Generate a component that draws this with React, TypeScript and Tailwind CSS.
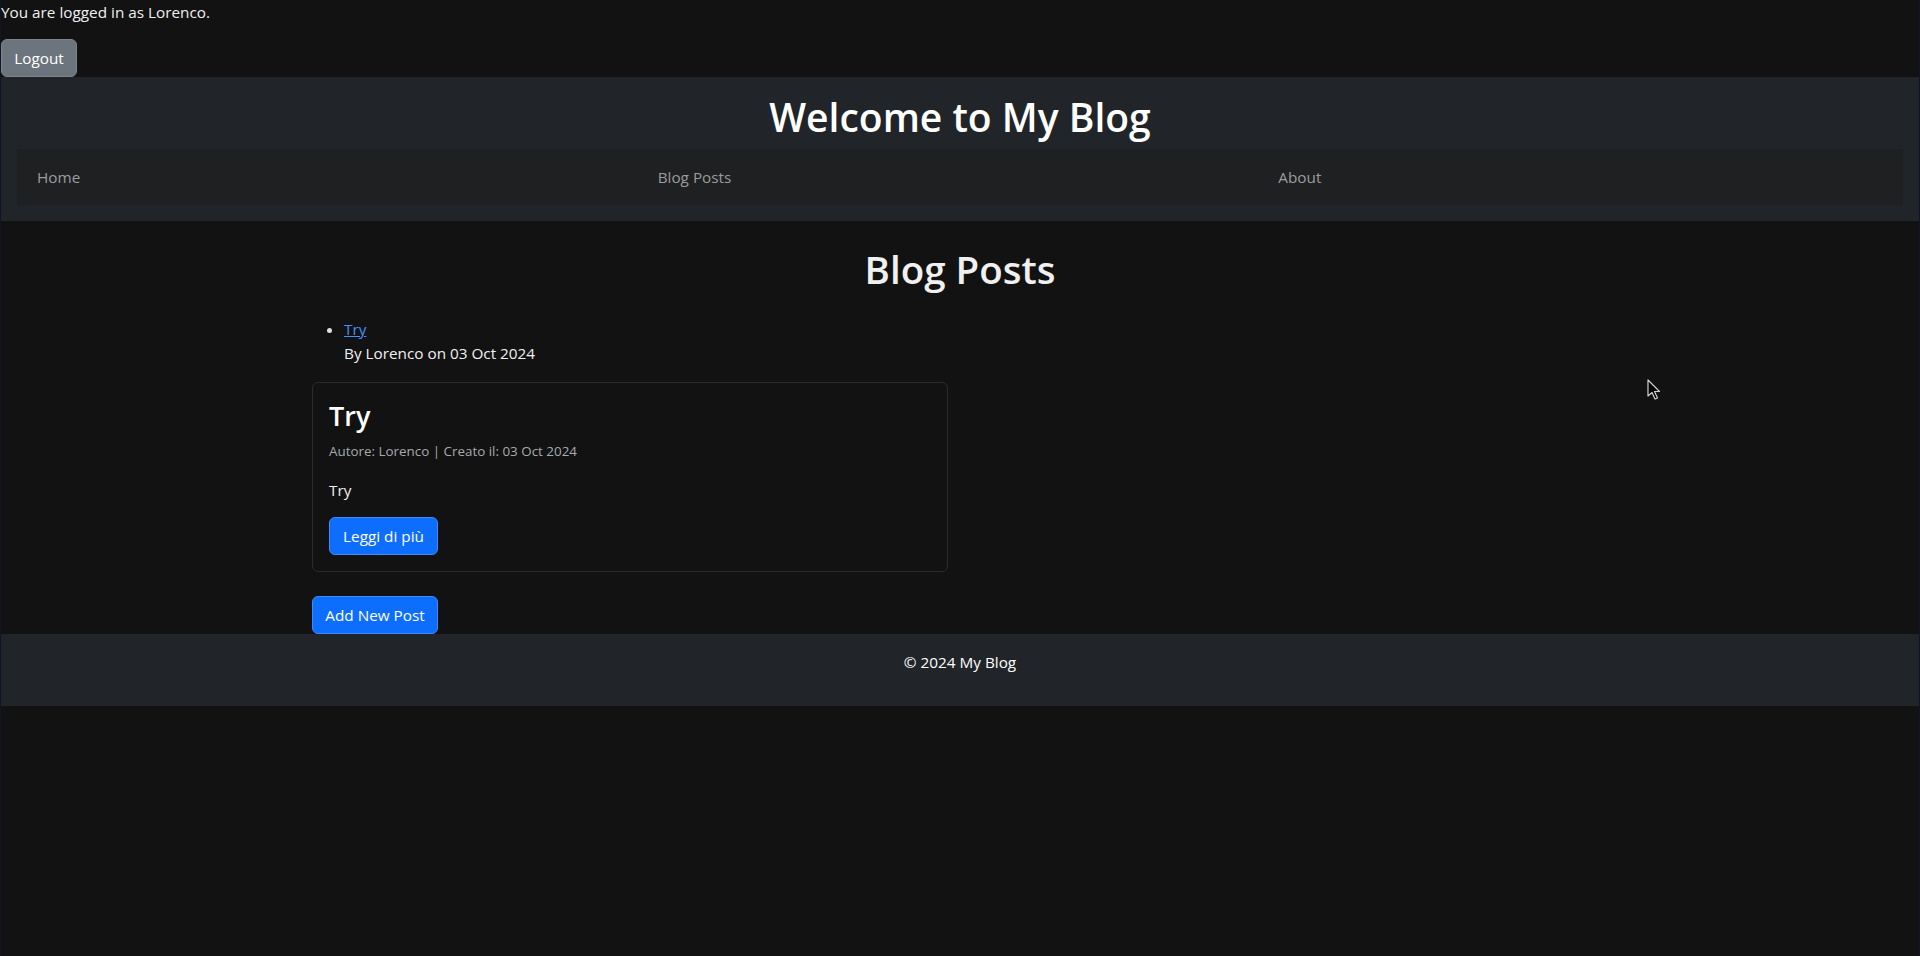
import React from "react";

export default function App() {
  return (
    <div className="relative min-h-[956px] bg-[#121212] text-white border-x border-[#0f1426] font-['Open_Sans',_'Noto_Sans',_sans-serif]">
      <p className="text-[15.3px] leading-[24px] mb-[15px] text-[#f0f0f0]">You are logged in as Lorenco.</p>
      <button className="h-[38px] w-[76px] rounded-[6px] bg-[#6c757d] border border-[#7d858c] text-[15.3px] leading-[24px] text-white">
        Logout
      </button>

      <header className="bg-[#212529] p-4">
        <h1 className="text-[39px] leading-[48px] font-semibold text-center mb-2">Welcome to My Blog</h1>
        <nav className="bg-[#1f2022] h-[56px] py-2 px-3">
          <ul className="grid grid-cols-3 h-full">
            <li className="flex items-center">
              <a className="px-2 text-[15.3px] leading-[24px] text-[#9b9c9d]">Home</a>
            </li>
            <li className="flex items-center">
              <a className="px-2 text-[15.3px] leading-[24px] text-[#9b9c9d]">Blog Posts</a>
            </li>
            <li className="flex items-center">
              <a className="px-2 text-[15.3px] leading-[24px] text-[#9b9c9d]">About</a>
            </li>
          </ul>
        </nav>
      </header>

      <main className="w-[1320px] mx-auto px-3 pt-6">
        <h1 className="text-[38.5px] leading-[48px] font-semibold text-center text-[#f0f0f0]">Blog Posts</h1>
        <ul className="list-disc pl-8 mt-[24px] mb-[17px] text-[15.3px] leading-[24px] marker:text-[#e0e0e0]">
          <li>
            <a className="text-[#4a8ff7] underline">Try</a>
            <br />
            <span className="text-[#f0f0f0]">By Lorenco on 03 Oct 2024</span>
          </li>
        </ul>
        <div className="w-[636px] border border-[#2a2b2c] rounded-[6px] p-4">
          <h3 className="text-[27px] leading-[34px] font-semibold mb-2">Try</h3>
          <p className="text-[13.4px] leading-[21px] text-[#a7aaad] mb-[16px]">
            Autore: Lorenco | Creato il: 03 Oct 2024
          </p>
          <p className="text-[15.3px] leading-[24px] mb-[15px] text-[#f0f0f0]">Try</p>
          <button className="h-[38px] w-[109px] rounded-[6px] bg-[#0d6efd] border border-[#3b8bff] text-[15.3px] leading-[24px] text-white">
            Leggi di più
          </button>
        </div>
        <button className="mt-6 h-[38px] w-[126px] rounded-[6px] bg-[#0d6efd] border border-[#3b8bff] text-[15.3px] leading-[24px] text-white">
          Add New Post
        </button>
      </main>

      <footer className="bg-[#212529] pt-4 pb-8 text-center">
        <p className="text-[15.3px] leading-[24px] text-white">© 2024 My Blog</p>
      </footer>

      <svg className="absolute left-[1646px] top-[379px]" width="14" height="22" viewBox="0 0 14 22">
        <path
          d="M1 1 L1 17 L5 13.5 L8 20 L10.5 19 L7.5 12.5 L12.5 12.5 Z"
          fill="#000"
          stroke="#d0d0d0"
          strokeWidth="1.2"
          strokeLinejoin="round"
        />
      </svg>
    </div>
  );
}
